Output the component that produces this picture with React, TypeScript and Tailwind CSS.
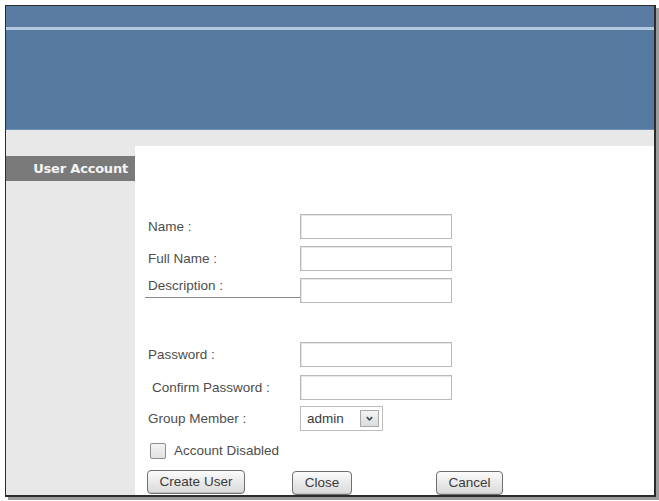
import React from "react";

const sans = { fontFamily: '"Liberation Sans", Arial, sans-serif' };
const tab = { fontFamily: '"DejaVu Sans", Verdana, sans-serif' };

const labelCls = "text-[13.5px] leading-[16px] text-[#4d4d4d]";

function Field({ label, indent, line }: { label: string; indent?: boolean; line?: boolean }) {
  return (
    <div className="flex items-start">
      {line ? (
        <div className={`w-[155px] h-[20px] pl-[3px] border-b border-[#8a8a8a] ${labelCls}`}>{label}</div>
      ) : (
        <div className={`w-[155px] h-[25px] flex items-center ${labelCls} ${indent ? "pl-[7px]" : "pl-[3px]"}`}>
          {label}
        </div>
      )}
      <div className="w-[152px] h-[25px] bg-white border border-[#b9b9b9] shadow-[inset_1px_1px_0_#e6e6e6]" />
    </div>
  );
}

function Btn({ children, w }: { children: React.ReactNode; w: string }) {
  return (
    <button
      className={`${w} h-[24px] rounded-[4px] border border-[#6f6f6f] bg-gradient-to-b from-[#fbfbfb] to-[#d9d9d9] text-[13.5px] leading-[16px] text-[#3a3a3a] shadow-[inset_0_-1px_0_#c4c4c4]`}
    >
      {children}
    </button>
  );
}

export default function App() {
  return (
    <div className="w-[659px] h-[501px] bg-white pt-[5px] pl-[5px] overflow-hidden" style={sans}>
      <div className="w-[651px] h-[492px] border border-r-2 border-b-2 border-[#2b2b2b] shadow-[3px_3px_0_#9c9c9c] flex flex-col bg-white overflow-hidden">
        {/* header */}
        <div className="h-[124px] shrink-0 bg-[#56799f] flex flex-col">
          <div className="h-[21px] bg-[#5a7ca3]" />
          <div className="h-[3px] bg-[#b4cae2]" />
          <div className="flex-1 bg-[#56799f] border-b border-[#6f8fb4]" />
        </div>
        <div className="h-[16px] shrink-0 bg-[#e8e8e8]" />

        <div className="flex-1 flex min-h-0">
          {/* sidebar */}
          <div className="w-[129px] bg-[#e8e8e8] pt-[10px]">
            <div
              className="h-[25px] bg-[#7a7a7a] flex items-center justify-end pr-[7px] text-[#f4f4f4] font-bold text-[13px] tracking-[-0.2px]"
              style={tab}
            >
              User Account
            </div>
          </div>

          {/* form */}
          <div className="flex-1 bg-white pl-[10px] flex flex-col">
            <div className="mt-[68px]">
              <Field label="Name :" />
            </div>
            <div className="mt-[7px]">
              <Field label="Full Name :" />
            </div>
            <div className="mt-[7px]">
              <Field label="Description :" line />
            </div>

            <div className="mt-[39px]">
              <Field label="Password :" />
            </div>
            <div className="mt-[8px]">
              <Field label="Confirm Password :" indent />
            </div>
            <div className="mt-[6px] flex items-center">
              <div className={`w-[155px] h-[25px] flex items-center pl-[3px] ${labelCls}`}>Group Member :</div>
              <div className="w-[83px] h-[25px] bg-white border border-[#bcbcbc] flex items-center justify-between pl-[6px] pr-[3px]">
                <span className="text-[13.5px] leading-[16px] text-[#3a3a3a]">admin</span>
                <div className="w-[19px] h-[17px] border border-[#a9a9a9] bg-gradient-to-b from-[#f4f4f4] to-[#dcdcdc] flex items-center justify-center">
                  <svg viewBox="0 0 10 10" className="w-[9px] h-[9px]">
                    <path d="M2 3.5 L5 6.5 L8 3.5" fill="none" stroke="#3d4a5c" strokeWidth="1.8" />
                  </svg>
                </div>
              </div>
            </div>

            <div className="mt-[12px] h-[16px] flex items-center pl-[5px]">
              <div className="w-[16px] h-[16px] rounded-[2px] border border-[#8a8f96] bg-gradient-to-b from-[#f3f3f3] to-[#e2e2e2]" />
              <span className={`ml-[8px] ${labelCls}`}>Account Disabled</span>
            </div>

            <div className="mt-[11px] flex pl-[2px]">
              <Btn w="w-[98px]">Create User</Btn>
              <div className="ml-[47px]">
                <Btn w="w-[60px]">Close</Btn>
              </div>
              <div className="ml-[84px]">
                <Btn w="w-[67px]">Cancel</Btn>
              </div>
            </div>
          </div>
        </div>
      </div>
    </div>
  );
}
